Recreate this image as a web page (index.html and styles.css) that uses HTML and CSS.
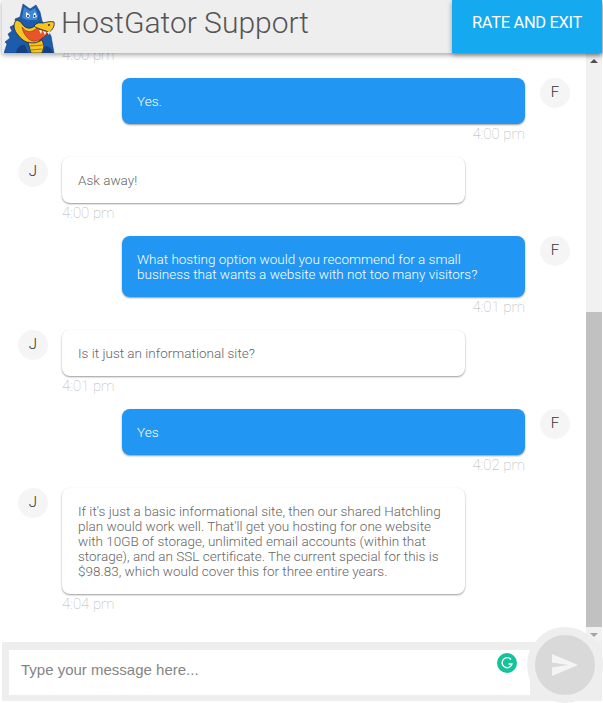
FILE: index.html
```html
<!DOCTYPE html>
<html lang="en">
<head>
    <meta charset="UTF-8">
    <meta name="viewport" content="width=device-width, initial-scale=1.0">
    <title>HostGator Support</title>
    <link rel="stylesheet" href="styles.css">
</head>
<body>
    <div class="chat">
        <header class="topbar">
            <svg class="logo" viewBox="0 0 52 50" width="52" height="50" aria-hidden="true">
                <!-- blue body and spines -->
                <path fill="#1d5cab" stroke="#143f80" stroke-width=".6" d="M0 50 L3 41 L1 39 L6 35 L4 31 L8 28 L6 24 L12 21 L11 16 L16 14 L19 1 L26 6 L32 2 L36 9 L38 18 L40 21 L47 33 L50 50 Z"/>
                <path fill="#3f86d6" d="M20 4 L26 8 L31 5 L34 12 L33 17 L24 17 L18 15 Z"/>
                <!-- smile -->
                <path fill="#f6c51f" stroke="#17233f" stroke-width=".8" d="M13 17 C8 20 10 28 14 32 C19 39 27 42 34 39 L45 29 L32 22 C27 27 20 26 17 19 Z"/>
                <!-- mouth -->
                <path fill="#e8552a" stroke="#7a1f10" stroke-width=".5" d="M18 24 C22 30 28 30 33 25 L44 30 C40 35 33 39 28 38 C23 36 19 30 18 24 Z"/>
                <!-- snout -->
                <path fill="#f6c51f" stroke="#17233f" stroke-width=".8" d="M30 23 C33 19 36 20 39 20 C43 19 47 18 50 19 C51 22 49 27 45 29 L36 26 C34 25 32 25 30 23 Z"/>
                <circle cx="45" cy="22" r=".9" fill="#17233f"/>
                <!-- teeth -->
                <path fill="#fff" d="M35 27 L38 27.500 L37 31 Z M39 28 L42 29 L41 32 Z M43 29 L46 28 L45 32 Z"/>
                <!-- eyes -->
                <path fill="#fff" d="M22 9 L26 12 L25 15 L22 14 Z M31 9 L33 14 L29 15 L29 12 Z"/>
                <circle cx="24" cy="13" r="1" fill="#10284f"/>
                <circle cx="30.500" cy="13" r="1" fill="#10284f"/>
                <!-- belly -->
                <path fill="#f6c51f" stroke="#17233f" stroke-width=".7" d="M24 39 C28 41 33 40 38 37 L40 43 L38 50 L27 50 Z"/>
                <path fill="none" stroke="#a8750f" stroke-width="1" d="M26 43 L39 42 M27 47 L38 46"/>
                <path fill="#143f80" d="M12 50 C13 44 17 41 21 42 L24 50 Z M39 50 L41 43 C45 43 48 46 49 50 Z"/>
            </svg>
            <h1 class="topbar-title">HostGator Support</h1>
            <button class="exit-btn">RATE AND EXIT</button>
        </header>

        <div class="body-row">
            <main class="messages">
                <div class="stamp stamp-clipped">4:00 pm</div>

                <div class="msg msg-me">
                    <div class="msg-main">
                        <div class="bubble">Yes.</div>
                        <div class="stamp">4:00 pm</div>
                    </div>
                    <div class="avatar">F</div>
                </div>

                <div class="msg">
                    <div class="avatar">J</div>
                    <div class="msg-main">
                        <div class="bubble">Ask away!</div>
                        <div class="stamp">4:00 pm</div>
                    </div>
                </div>

                <div class="msg msg-me">
                    <div class="msg-main">
                        <div class="bubble">What hosting option would you recommend for a small business that wants a website with not too many visitors?</div>
                        <div class="stamp">4:01 pm</div>
                    </div>
                    <div class="avatar">F</div>
                </div>

                <div class="msg">
                    <div class="avatar">J</div>
                    <div class="msg-main">
                        <div class="bubble">Is it just an informational site?</div>
                        <div class="stamp">4:01 pm</div>
                    </div>
                </div>

                <div class="msg msg-me">
                    <div class="msg-main">
                        <div class="bubble">Yes</div>
                        <div class="stamp">4:02 pm</div>
                    </div>
                    <div class="avatar">F</div>
                </div>

                <div class="msg">
                    <div class="avatar">J</div>
                    <div class="msg-main">
                        <div class="bubble">If it's just a basic informational site, then our shared Hatchling plan would work well. That'll get you hosting for one website with 10GB of storage, unlimited email accounts (within that storage), and an SSL certificate. The current special for this is $98.83, which would cover this for three entire years.</div>
                        <div class="stamp">4:04 pm</div>
                    </div>
                </div>
            </main>

            <div class="scrollbar">
                <span class="arrow arrow-up"></span>
                <div class="thumb"></div>
                <span class="arrow arrow-down"></span>
            </div>
        </div>

        <footer class="composer">
            <div class="composer-input">
                <span class="placeholder">Type your message here...</span>
                <svg class="grammarly" viewBox="0 0 20 20" width="20" height="20" aria-hidden="true">
                    <circle cx="10" cy="10" r="10" fill="#15c39a"/>
                    <path fill="none" stroke="#fff" stroke-width="1.300" d="M14 6.500 A5 5 0 1 0 15 11 L11.500 11"/>
                </svg>
            </div>
            <button class="send-btn" aria-label="Send">
                <svg viewBox="0 0 26 22" width="26" height="22" aria-hidden="true">
                    <path fill="#f4f4f4" d="M0 0 L26 11 L0 22 L0 13.500 L16 11 L0 8.500 Z"/>
                </svg>
            </button>
        </footer>
    </div>
</body>
</html>
```

FILE: styles.css
```css
* { margin: 0; padding: 0; box-sizing: border-box; }

body {
    background: #fff;
    font-family: 'Roboto', sans-serif;
    overflow: hidden;
}

.chat {
    display: flex;
    flex-direction: column;
    height: 703px;
    padding-right: 1px;
    position: relative;
}

/* top bar */
.topbar {
    display: flex;
    align-items: stretch;
    height: 53px;
    margin-left: 2px;
    background: #eee;
    box-shadow: 0 2px 5px rgba(0, 0, 0, 0.35);
    position: relative;
    z-index: 2;
}

.logo {
    align-self: flex-end;
    margin: 0 5px 0 2px;
    flex-shrink: 0;
}

.topbar-title {
    flex: 1;
    font-size: 30px;
    font-weight: 300;
    line-height: 45px;
    color: #555;
}

.exit-btn {
    width: 150px;
    padding-bottom: 8px;
    border: none;
    background: #15a9f0;
    color: #fff;
    font-family: inherit;
    font-size: 16.5px;
    letter-spacing: -0.35px;
    box-shadow: 0 2px 5px rgba(0, 0, 0, 0.35);
}

/* message list */
.body-row {
    display: flex;
    flex: 1;
    min-height: 0;
}

.messages {
    flex: 1;
    padding: 0 16px 0 18px;
    overflow: hidden;
}

.stamp {
    margin-top: 1px;
    font-size: 15px;
    font-weight: 100;
    line-height: 18px;
    color: #b5b5b5;
}

.stamp-clipped {
    margin: -7px 0 14px 44px;
}

.msg {
    display: flex;
    gap: 14px;
    margin-bottom: 14px;
}

.msg-main {
    width: 403px;
}

.msg-me {
    justify-content: flex-end;
    gap: 15px;
}

.msg-me .stamp {
    text-align: right;
}

.avatar {
    flex-shrink: 0;
    width: 30px;
    height: 30px;
    border-radius: 50%;
    background: #f5f5f5;
    color: #333;
    font-size: 15px;
    line-height: 29px;
    text-align: center;
    font-weight: 300;
}

.bubble {
    padding: 16px 16px 15px;
    border-radius: 8px;
    background: #fff;
    color: #666;
    font-size: 13.5px;
    font-weight: 300;
    line-height: 15px;
    box-shadow: 0 1px 2px rgba(0, 0, 0, 0.4);
}

.msg-me .bubble {
    padding-left: 15px;
    background: #2196f3;
    color: #fff;
}

/* fake scrollbar, the list never really scrolls */
.scrollbar {
    display: flex;
    flex-direction: column;
    align-items: center;
    width: 16px;
    background: #f1f1f1;
}

.arrow {
    width: 0;
    height: 0;
    margin: 6px 0 5px;
    border-left: 4px solid transparent;
    border-right: 4px solid transparent;
}

.arrow-up {
    border-bottom: 4px solid #505050;
}

.arrow-down {
    border-top: 4px solid #a3a3a3;
}

.thumb {
    width: 100%;
    flex: 1;
    margin-top: 244px;
    background: #c1c1c1;
}

/* composer */
.composer {
    display: flex;
    height: 59px;
    margin: 0 0 2px 2px;
    padding: 8px 0 6px 7px;
    background: #eee;
    position: relative;
}

.composer-input {
    display: flex;
    align-items: center;
    justify-content: space-between;
    width: 521px;
    padding: 0 13px 6px 12px;
    background: #fff;
}

.placeholder {
    font-family: 'Liberation Sans', sans-serif;
    font-size: 15px;
    color: #858585;
}

.grammarly {
    align-self: flex-start;
    margin-top: 3px;
}

.send-btn {
    display: flex;
    align-items: center;
    justify-content: center;
    position: absolute;
    right: -1px;
    top: -15px;
    width: 76px;
    height: 76px;
    border: 8px solid #eee;
    border-radius: 50%;
    background: #d9d9d9;
}
```
